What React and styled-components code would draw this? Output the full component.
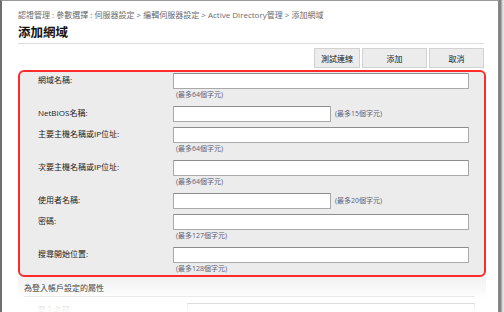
import React from "react";
import styled, { createGlobalStyle } from "styled-components";

const Global = createGlobalStyle`
  html, body { margin: 0; padding: 0; background: #fff; }
  body { font-family: "Noto Sans CJK TC", "Open Sans", sans-serif; }
`;

const Window = styled.div`
  width: 504px;
  height: 312px;
  box-sizing: border-box;
  overflow: hidden;
  display: flex;
  background: linear-gradient(to right, #fff 0, #fff 499px, #7a7a7a 499px, #8a8a8a 501px, #cfcfcf 502px, #ececec 504px);
`;

const Frame = styled.div`
  width: 499px;
  height: 312px;
  box-sizing: border-box;
  border-left: 2px solid #6e6e6e;
  border-top: 1px solid #9a9a9a;
  border-right: 1px solid #8a8a8a;
  background: #fff;
  position: relative;
`;

const Content = styled.div`
  width: 468px;
  margin-left: 16px;
  padding-top: 8px;
  display: flex;
  flex-direction: column;
`;

const Breadcrumb = styled.div`
  font-size: 8px;
  line-height: 12px;
  height: 12px;
  color: #6a6a6a;
  white-space: nowrap;
  font-family: "Open Sans", "Noto Sans CJK TC", sans-serif;
`;

const Title = styled.h1`
  margin: 3px 2px 0 0;
  font-size: 12.5px;
  line-height: 16px;
  font-weight: 700;
  color: #111;
  padding-bottom: 3px;
  border-bottom: 1px solid #dcdcdc;
`;

const Toolbar = styled.div`
  display: flex;
  justify-content: flex-end;
  gap: 2px;
  margin-top: 4px;
  padding-right: 2px;
`;

const Button = styled.button`
  width: ${(p) => p.$w}px;
  height: 20px;
  box-sizing: border-box;
  border: 1px solid #d2d2d2;
  background: #ececec;
  font-family: "Noto Sans CJK TC", sans-serif;
  font-size: 8px;
  color: #222;
  padding: 0;
`;

const Box = styled.div`
  margin-top: 2px;
  border: 2px solid #ff2a2a;
  border-radius: 6px;
  background: #ececec;
  padding: 1px 15px 0 18px;
  display: flex;
  flex-direction: column;
  gap: 5px;
`;

const Row = styled.div`
  display: grid;
  grid-template-columns: 135px 1fr;
`;

const Label = styled.div`
  font-size: 8px;
  line-height: 14px;
  height: 16px;
  color: #222;
  white-space: nowrap;
  font-family: "Open Sans", "Noto Sans CJK TC", sans-serif;
`;

const Field = styled.div`
  display: flex;
  flex-direction: column;
`;

const InputLine = styled.div`
  display: flex;
  align-items: center;
  gap: 4px;
`;

const Input = styled.div`
  box-sizing: border-box;
  height: 16px;
  width: ${(p) => (p.$short ? "158px" : "100%")};
  background: #fff;
  border: 1px solid #a9a9a9;
  border-top-color: #8c8c8c;
  border-radius: 1px;
`;

const Hint = styled.div`
  font-size: 7px;
  line-height: 12px;
  height: 12px;
  color: #5a6078;
  padding-left: ${(p) => (p.$inline ? 0 : 3)}px;
  white-space: nowrap;
  font-family: "Open Sans", "Noto Sans CJK TC", sans-serif;
`;

const Lower = styled.div`
  position: relative;
  margin-top: 0;
  padding: 5px 11px 0 6px;
  height: 40px;
  background: linear-gradient(#f1f1f1, #fff 22px);
`;

const SectionTitle = styled.div`
  font-size: 8px;
  line-height: 12px;
  color: #444;
  padding-bottom: 2px;
  border-bottom: 1px solid #dedede;
`;

const FadedRow = styled.div`
  display: grid;
  grid-template-columns: 149px 1fr;
  padding: 6px 0 0 14px;
`;

const Fade = styled.div`
  position: absolute;
  left: 0;
  right: 0;
  top: 18px;
  bottom: 0;
  background: linear-gradient(rgba(255,255,255,0.3), rgba(255,255,255,0.95) 14px);
`;

const fields = [
  { label: "網域名稱:", hint: "(最多64個字元)" },
  { label: "NetBIOS名稱:", short: true, inline: "(最多15個字元)" },
  { label: "主要主機名稱或IP位址:", hint: "(最多64個字元)" },
  { label: "次要主機名稱或IP位址:", hint: "(最多64個字元)" },
  { label: "使用者名稱:", short: true, inline: "(最多20個字元)" },
  { label: "密碼:", hint: "(最多127個字元)" },
  { label: "搜尋開始位置:", hint: "(最多128個字元)" },
];

export default function App() {
  return (
    <>
      <Global />
      <Window>
        <Frame>
          <Content>
            <Breadcrumb>
              認證管理 : 參數選擇 : 伺服器設定 &gt; 編輯伺服器設定 &gt; Active Directory管理 &gt; 添加網域
            </Breadcrumb>
            <Title>添加網域</Title>
            <Toolbar>
              <Button $w={46}>測試連線</Button>
              <Button $w={65}>添加</Button>
              <Button $w={55}>取消</Button>
            </Toolbar>
            <Box>
              {fields.map((f) => (
                <Row key={f.label}>
                  <Label>{f.label}</Label>
                  <Field>
                    <InputLine>
                      <Input $short={f.short} />
                      {f.inline && <Hint $inline>{f.inline}</Hint>}
                    </InputLine>
                    {f.hint && <Hint>{f.hint}</Hint>}
                  </Field>
                </Row>
              ))}
            </Box>
            <Lower>
              <SectionTitle>為登入帳戶設定的屬性</SectionTitle>
              <FadedRow>
                <Label>登入名稱:</Label>
                <Input />
              </FadedRow>
              <Fade />
            </Lower>
          </Content>
        </Frame>
      </Window>
    </>
  );
}
